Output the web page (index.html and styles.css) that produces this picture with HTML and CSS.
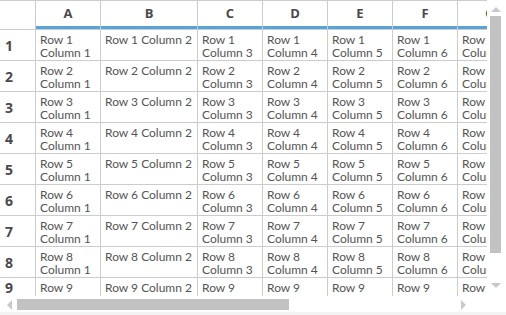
FILE: index.html
```html
<!DOCTYPE html>
<html lang="en">
<head>
<meta charset="UTF-8" />
<meta name="viewport" content="width=device-width, initial-scale=1" />
<title>Spreadsheet grid</title>
<link rel="stylesheet" href="styles.css">
</head>
<body>

<div class="sheet">
  <div class="viewport">
    <div class="grid" id="grid">
      <div class="corner"></div>
    </div>
  </div>

  <div class="vbar">
    <span class="arrow-up"></span>
    <span class="vthumb"></span>
    <span class="arrow-down"></span>
  </div>

  <div class="hbar">
    <span class="arrow-left"></span>
    <span class="hthumb"></span>
    <span class="arrow-right"></span>
  </div>
  <div class="bar-corner"></div>
</div>

<script>
  const grid = document.getElementById('grid');
  const cols = ['A', 'B', 'C', 'D', 'E', 'F', 'G'];
  const visibleRows = 9;

  cols.forEach(c => {
    const th = document.createElement('div');
    th.className = 'col-head';
    th.textContent = c;
    grid.appendChild(th);
  });

  for (let r = 1; r <= visibleRows; r++) {
    const rh = document.createElement('div');
    rh.className = r === visibleRows ? 'row-head partial' : 'row-head';
    rh.textContent = r;
    grid.appendChild(rh);
    for (let c = 1; c <= cols.length; c++) {
      const td = document.createElement('div');
      td.className = 'cell';
      td.textContent = `Row ${r} Column ${c}`;
      grid.appendChild(td);
    }
  }
</script>

</body>
</html>
```

FILE: styles.css
```css
body {
  margin: 0; padding: 0;
  background: #f3f3f3;
  font-family: Lato, 'Open Sans', Arial, sans-serif;
  color: #555;
}
.sheet {
  width: 506px;
  height: 312px;
  background: #fff;
  display: grid;
  grid-template-columns: 487px 19px;
  grid-template-rows: 296px 16px;
}
.viewport {
  overflow: hidden;
}
.grid {
  display: grid;
  grid-template-columns: 36px 65px 97px 65px 65px 65px 65px 65px;
  grid-template-rows: 30px;
  grid-auto-rows: 31px;
  width: 523px;
}
.grid > div {
  box-sizing: border-box;
  border-right: 1px solid #ccc;
  border-bottom: 1px solid #ccc;
  overflow: hidden;
}
.corner,
.col-head {
  border-top: 1px solid #ccc;
}
.col-head {
  font-family: 'Open Sans', Arial, sans-serif;
  font-weight: 700;
  font-size: 13px;
  color: #4a4a4a;
  text-align: center;
  line-height: 24px;
  box-shadow: inset 0 -3px 0 #57a3da;
}
.row-head {
  font-family: 'Open Sans', Arial, sans-serif;
  font-weight: 700;
  font-size: 14px;
  color: #4a4a4a;
  display: flex;
  align-items: center;
  padding-left: 5px;
}
/* the last row is cut by the viewport, its number sits in the visible part */
.row-head.partial {
  align-items: flex-start;
}
.cell {
  font-size: 12px;
  line-height: 13px;
  padding: 3px 4px 0;
}

/* scrollbars */
.vbar {
  display: flex;
  flex-direction: column;
  padding: 7px 0 0 3px;
}
.arrow-up,
.arrow-down {
  width: 0; height: 0;
  margin-left: 1px;
  border-left: 5px solid transparent;
  border-right: 5px solid transparent;
}
.arrow-up {
  border-bottom: 5px solid #c9c9c9;
}
.arrow-down {
  border-top: 5px solid #c9c9c9;
  margin-top: auto;
  margin-bottom: 8px;
}
.vthumb {
  width: 11px;
  height: 237px;
  margin-top: 4px;
  background: #c2c2c2;
}
.hbar {
  display: flex;
  align-items: center;
  padding: 3px 0 2px 7px;
}
.arrow-left,
.arrow-right {
  width: 0; height: 0;
  border-top: 5px solid transparent;
  border-bottom: 5px solid transparent;
}
.arrow-left {
  border-right: 5px solid #c9c9c9;
}
.arrow-right {
  border-left: 5px solid #c9c9c9;
  margin-left: 172px;
}
.hthumb {
  width: 272px;
  height: 11px;
  margin-left: 5px;
  background: #c2c2c2;
}
```
